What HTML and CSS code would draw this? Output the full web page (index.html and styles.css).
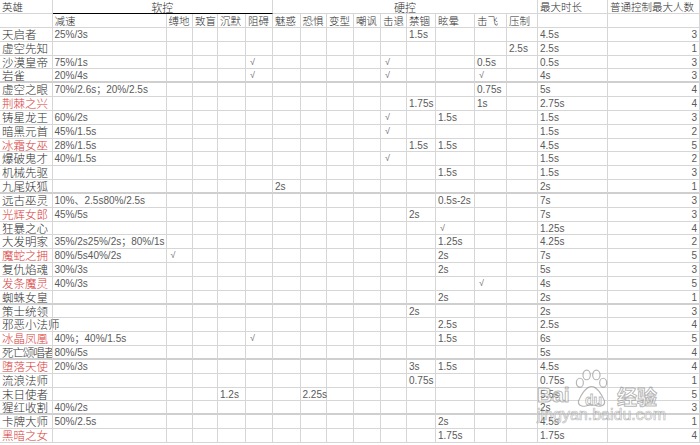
FILE: index.html
```html
<!DOCTYPE html>
<html lang="zh-CN">
<head>
<meta charset="utf-8">
<title>英雄控制统计</title>
<link rel="stylesheet" href="styles.css">
</head>
<body>
<div class="sheet">
<div class="grid">
<div class="r h1">
<span class="hd">英雄</span><span class="hd group soft">软控</span><span class="hd group hard">硬控</span><span class="hd">最大时长</span><span class="hd">普通控制最大人数</span>
</div>
<div class="r h2">
<span></span><span class="hd">减速</span><span class="hd">缚地</span><span class="hd">致盲</span><span class="hd">沉默</span><span class="hd">阻碍</span><span class="hd">魅惑</span><span class="hd">恐惧</span><span class="hd">变型</span><span class="hd">嘲讽</span><span class="hd">击退</span><span class="hd">禁锢</span><span class="hd">眩晕</span><span class="hd">击飞</span><span class="hd">压制</span><span></span><span></span>
</div>
<div class="r"><span class="n">天启者</span><span>25%/3s</span><span></span><span></span><span></span><span></span><span></span><span></span><span></span><span></span><span></span><span>1.5s</span><span></span><span></span><span></span><span>4.5s</span><span class="c">3</span></div>
<div class="r"><span class="n">虚空先知</span><span></span><span></span><span></span><span></span><span></span><span></span><span></span><span></span><span></span><span></span><span></span><span></span><span></span><span>2.5s</span><span>2.5s</span><span class="c">1</span></div>
<div class="r"><span class="n">沙漠皇帝</span><span>75%/1s</span><span></span><span></span><span></span><span class="ck">√</span><span></span><span></span><span></span><span></span><span class="ck">√</span><span></span><span></span><span>0.5s</span><span></span><span>0.5s</span><span class="c">3</span></div>
<div class="r sep"><span class="n">岩雀</span><span>20%/4s</span><span></span><span></span><span></span><span class="ck">√</span><span></span><span></span><span></span><span></span><span class="ck">√</span><span></span><span></span><span class="ck">√</span><span></span><span>4s</span><span class="c">3</span></div>
<div class="r"><span class="n">虚空之眼</span><span>70%/2.6s；20%/2.5s</span><span></span><span></span><span></span><span></span><span></span><span></span><span></span><span></span><span></span><span></span><span></span><span>0.75s</span><span></span><span>5s</span><span class="c">4</span></div>
<div class="r"><span class="n red">荆棘之兴</span><span></span><span></span><span></span><span></span><span></span><span></span><span></span><span></span><span></span><span></span><span>1.75s</span><span></span><span>1s</span><span></span><span>2.75s</span><span class="c">4</span></div>
<div class="r"><span class="n">铸星龙王</span><span>60%/2s</span><span></span><span></span><span></span><span></span><span></span><span></span><span></span><span></span><span class="ck">√</span><span></span><span>1.5s</span><span></span><span></span><span>1.5s</span><span class="c">3</span></div>
<div class="r"><span class="n">暗黑元首</span><span>45%/1.5s</span><span></span><span></span><span></span><span></span><span></span><span></span><span></span><span></span><span class="ck">√</span><span></span><span></span><span></span><span></span><span>1.5s</span><span class="c">2</span></div>
<div class="r"><span class="n red">冰霜女巫</span><span>28%/1.5s</span><span></span><span></span><span></span><span></span><span></span><span></span><span></span><span></span><span></span><span>1.5s</span><span>1.5s</span><span></span><span></span><span>4.5s</span><span class="c">5</span></div>
<div class="r"><span class="n">爆破鬼才</span><span>40%/1.5s</span><span></span><span></span><span></span><span></span><span></span><span></span><span></span><span></span><span class="ck">√</span><span></span><span></span><span></span><span></span><span>1.5s</span><span class="c">2</span></div>
<div class="r"><span class="n">机械先驱</span><span></span><span></span><span></span><span></span><span></span><span></span><span></span><span></span><span></span><span></span><span></span><span>1.5s</span><span></span><span></span><span>1.5s</span><span class="c">3</span></div>
<div class="r sep"><span class="n">九尾妖狐</span><span></span><span></span><span></span><span></span><span></span><span>2s</span><span></span><span></span><span></span><span></span><span></span><span></span><span></span><span></span><span>2s</span><span class="c">1</span></div>
<div class="r"><span class="n">远古巫灵</span><span>10%、2.5s80%/2.5s</span><span></span><span></span><span></span><span></span><span></span><span></span><span></span><span></span><span></span><span></span><span>0.5s-2s</span><span></span><span></span><span>7s</span><span class="c">3</span></div>
<div class="r"><span class="n red">光辉女郎</span><span>45%/5s</span><span></span><span></span><span></span><span></span><span></span><span></span><span></span><span></span><span></span><span>2s</span><span></span><span></span><span></span><span>7s</span><span class="c">3</span></div>
<div class="r"><span class="n">狂暴之心</span><span></span><span></span><span></span><span></span><span></span><span></span><span></span><span></span><span></span><span></span><span></span><span class="ck">√</span><span></span><span></span><span>1.25s</span><span class="c">4</span></div>
<div class="r"><span class="n">大发明家</span><span>35%/2s25%/2s；80%/1s</span><span></span><span></span><span></span><span></span><span></span><span></span><span></span><span></span><span></span><span></span><span>1.25s</span><span></span><span></span><span>4.25s</span><span class="c">2</span></div>
<div class="r"><span class="n red">魔蛇之拥</span><span>80%/5s40%/2s</span><span class="ck">√</span><span></span><span></span><span></span><span></span><span></span><span></span><span></span><span></span><span></span><span>2s</span><span></span><span></span><span>7s</span><span class="c">5</span></div>
<div class="r"><span class="n">复仇焰魂</span><span>30%/3s</span><span></span><span></span><span></span><span></span><span></span><span></span><span></span><span></span><span></span><span></span><span>2s</span><span></span><span></span><span>5s</span><span class="c">3</span></div>
<div class="r"><span class="n red">发条魔灵</span><span>40%/3s</span><span></span><span></span><span></span><span></span><span></span><span></span><span></span><span></span><span></span><span></span><span></span><span class="ck">√</span><span></span><span>4s</span><span class="c">5</span></div>
<div class="r sep"><span class="n">蜘蛛女皇</span><span></span><span></span><span></span><span></span><span></span><span></span><span></span><span></span><span></span><span></span><span></span><span>2s</span><span></span><span></span><span>2s</span><span class="c">1</span></div>
<div class="r"><span class="n">策士统领</span><span></span><span></span><span></span><span></span><span></span><span></span><span></span><span></span><span></span><span></span><span>2s</span><span></span><span></span><span></span><span>2s</span><span class="c">3</span></div>
<div class="r"><span class="n">邪恶小法师</span><span></span><span></span><span></span><span></span><span></span><span></span><span></span><span></span><span></span><span></span><span></span><span>2.5s</span><span></span><span></span><span>2.5s</span><span class="c">4</span></div>
<div class="r"><span class="n red">冰晶凤凰</span><span>40%；40%/1.5s</span><span></span><span></span><span></span><span class="ck">√</span><span></span><span></span><span></span><span></span><span></span><span></span><span>1.5s</span><span></span><span></span><span>6s</span><span class="c">5</span></div>
<div class="r sep"><span class="n clip">死亡颂唱者</span><span>80%/5s</span><span></span><span></span><span></span><span></span><span></span><span></span><span></span><span></span><span></span><span></span><span></span><span></span><span></span><span>5s</span><span class="c">4</span></div>
<div class="r"><span class="n red">堕落天使</span><span>20%/3s</span><span></span><span></span><span></span><span></span><span></span><span></span><span></span><span></span><span></span><span>3s</span><span>1.5s</span><span></span><span></span><span>4.5s</span><span class="c">4</span></div>
<div class="r"><span class="n">流浪法师</span><span></span><span></span><span></span><span></span><span></span><span></span><span></span><span></span><span></span><span></span><span>0.75s</span><span></span><span></span><span></span><span>0.75s</span><span class="c">1</span></div>
<div class="r"><span class="n">末日使者</span><span></span><span></span><span></span><span>1.2s</span><span></span><span></span><span>2.25s</span><span></span><span></span><span></span><span></span><span></span><span></span><span></span><span>5.5s</span><span class="c">5</span></div>
<div class="r sep"><span class="n">猩红收割</span><span>40%/2s</span><span></span><span></span><span></span><span></span><span></span><span></span><span></span><span></span><span></span><span></span><span></span><span></span><span></span><span>2s</span><span class="c">3</span></div>
<div class="r"><span class="n">卡牌大师</span><span>50%/2.5s</span><span></span><span></span><span></span><span></span><span></span><span></span><span></span><span></span><span></span><span></span><span>2s</span><span></span><span></span><span>4.5s</span><span class="c">1</span></div>
<div class="r"><span class="n red">黑暗之女</span><span></span><span></span><span></span><span></span><span></span><span></span><span></span><span></span><span></span><span></span><span></span><span>1.75s</span><span></span><span></span><span>1.75s</span><span class="c">4</span></div>
</div>

<div class="watermark">
  <span class="wm-big">Bai</span>
  <svg class="wm-paw" width="33" height="41" viewBox="0 0 34 40">
    <g fill="rgba(255,255,255,0.5)" stroke="rgba(120,120,120,0.55)" stroke-width="1.2">
      <ellipse cx="5" cy="14" rx="3.6" ry="4.6"/>
      <ellipse cx="12" cy="6" rx="3.8" ry="5"/>
      <ellipse cx="22" cy="6" rx="3.8" ry="5"/>
      <ellipse cx="29" cy="14" rx="3.6" ry="4.6"/>
      <path d="M17 18 C 11 18, 6 27, 4 32 C 2 37, 7 39, 11 38 C 14 37, 20 37, 23 38 C 27 39, 32 37, 30 32 C 28 27, 23 18, 17 18 Z"/>
    </g>
  </svg>
  <span class="wm-du">du</span>
  <span class="wm-cn">经验</span>
  <span class="wm-url">jingyan.baidu.com</span>
</div>
</div>
</body>
</html>
```

FILE: styles.css
```css
html, body {
  margin: 0;
  padding: 0;
  background: #ffffff;
}

.sheet {
  position: relative;
  width: 700px;
  height: 445px;
  overflow: hidden;
}

.grid {
  display: grid;
  width: 700px;
  grid-template-columns: 52.5px 114px 26.5px 25px 28px 27px 27.5px 26.5px 27px 27px 26px 29px 39px 32px 31px 70px 92px;
  grid-template-rows: 14px 14px repeat(30, 13.83px);
  font-family: "Liberation Sans", "Noto Sans CJK SC", sans-serif;
  font-size: 10px;
  color: #5a5a5a;
}

.r {
  display: contents;
}

.r > span {
  display: block;
  box-sizing: border-box;
  min-width: 0;
  border-right: 1px solid #d6d6d6;
  border-bottom: 1px solid #d6d6d6;
  padding-left: 2px;
  line-height: 13px;
  white-space: nowrap;
  overflow: visible;
}

.r.sep > span {
  border-bottom: 2px solid #cfcfcf;
}

.hd {
  font-family: "Noto Sans CJK SC", sans-serif;
  font-size: 10.5px;
  font-weight: 300;
  color: #2e2e2e;
}

.r.h1 > span {
  line-height: 14px;
}

.n {
  font-family: "Noto Sans CJK SC", sans-serif;
  font-size: 11.5px;
  font-weight: 300;
  color: #2e2e2e;
}

.r > .group {
  text-align: center;
  padding-left: 0;
  font-size: 11px;
}

.r > .soft {
  grid-column: span 5;
  border-bottom: 1px solid #000000;
}

.r > .hard {
  grid-column: span 9;
}

.n.red {
  color: #d83a3a;
}

.r > .clip {
  letter-spacing: -1.1px;
  overflow: hidden;
}

.r > .ck {
  color: #707070;
  padding-left: 4px;
  font-size: 9px;
}

.r > .c {
  text-align: right;
  padding: 0 2px 0 0;
}

/* watermark overlay: each mark placed on top of the sheet */
.watermark {
  position: absolute;
  left: 535px;
  top: 366px;
  width: 130px;
  height: 60px;
  pointer-events: none;
  white-space: nowrap;
}

.wm-big,
.wm-du,
.wm-cn,
.wm-url,
.wm-paw {
  position: absolute;
}

.wm-big {
  left: 2px;
  top: 18px;
  font-family: "Liberation Sans", sans-serif;
  font-weight: bold;
  font-size: 21px;
  line-height: 21px;
  color: rgba(255, 255, 255, 0.5);
  -webkit-text-stroke: 1px rgba(120, 120, 120, 0.55);
}

.wm-paw {
  left: 40px;
  top: 2px;
}

.wm-du {
  left: 50px;
  top: 27px;
  font-family: "Liberation Sans", sans-serif;
  font-weight: bold;
  font-size: 14px;
  line-height: 14px;
  color: rgba(255, 255, 255, 0.5);
  -webkit-text-stroke: 0.8px rgba(120, 120, 120, 0.55);
}

.wm-cn {
  left: 82px;
  top: 21px;
  font-family: "Noto Sans CJK SC", sans-serif;
  font-weight: bold;
  font-size: 20px;
  line-height: 20px;
  color: rgba(255, 255, 255, 0.5);
  -webkit-text-stroke: 1px rgba(120, 120, 120, 0.55);
}

.wm-url {
  left: 2px;
  top: 41px;
  font-family: "Liberation Sans", sans-serif;
  font-size: 16px;
  line-height: 16px;
  color: rgba(255, 255, 255, 0.5);
  -webkit-text-stroke: 0.7px rgba(120, 120, 120, 0.5);
}
```
